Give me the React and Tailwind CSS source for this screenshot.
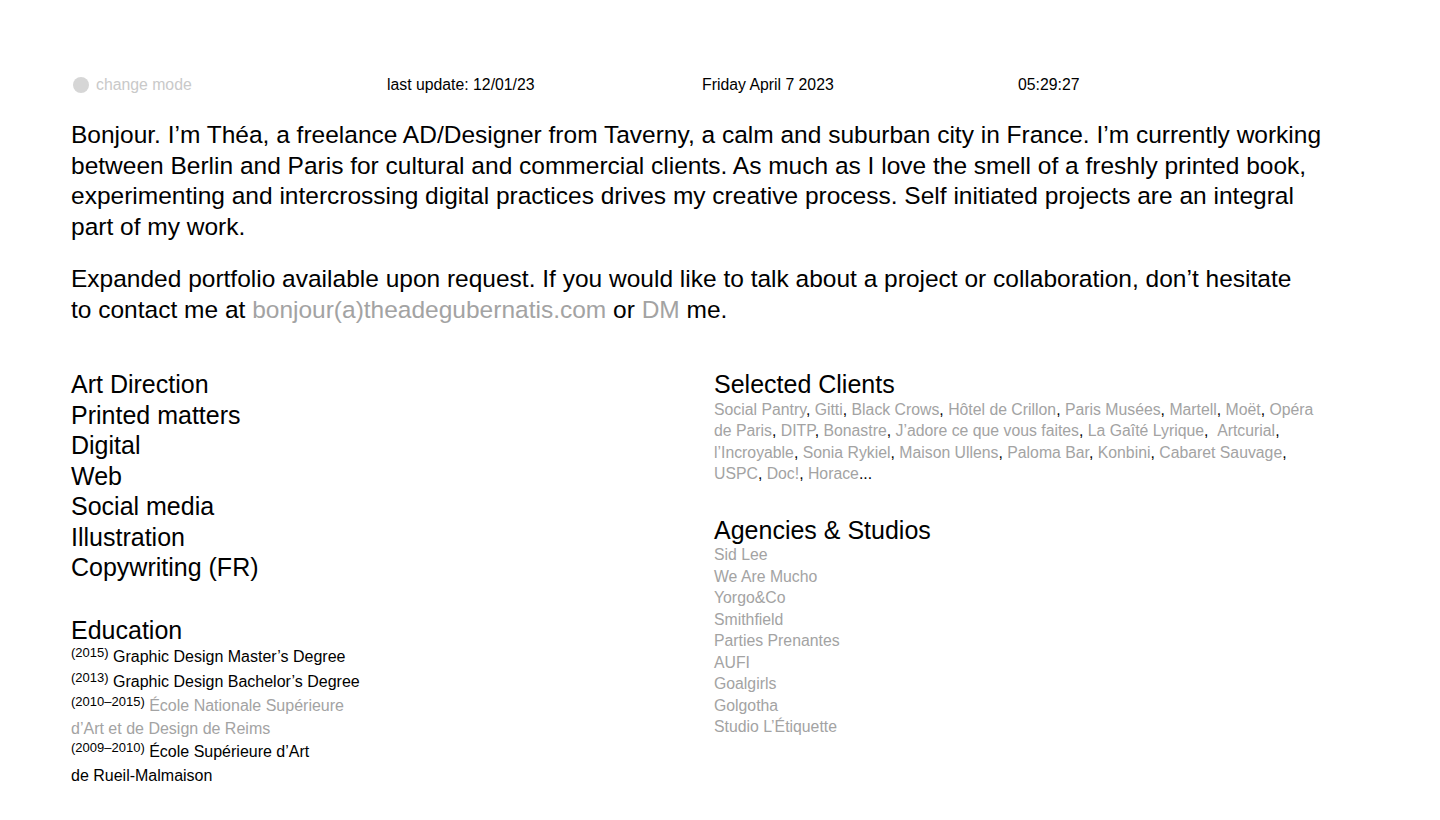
import React from 'react';

const SKILLS = ['Art Direction', 'Printed matters', 'Digital', 'Web', 'Social media', 'Illustration', 'Copywriting (FR)'];

const CLIENTS = [
    'Social Pantry', 'Gitti', 'Black Crows', 'Hôtel de Crillon', 'Paris Musées', 'Martell', 'Moët', 'Opéra de Paris',
    'DITP', 'Bonastre', 'J’adore ce que vous faites', 'La Gaîté Lyrique', '\u00a0Artcurial', 'l’Incroyable', 'Sonia Rykiel',
    'Maison Ullens', 'Paloma Bar', 'Konbini', 'Cabaret Sauvage', 'USPC', 'Doc!', 'Horace',
];

const AGENCIES = ['Sid Lee', 'We Are Mucho', 'Yorgo&Co', 'Smithfield', 'Parties Prenantes', 'AUFI', 'Goalgirls', 'Golgotha', 'Studio L’Étiquette'];

export default function App() {
    return (
        <div
            className="min-h-screen bg-white text-black px-[71px] pt-[75px]"
            style={{ fontFamily: '"Liberation Sans", Arial, sans-serif' }}
        >
            {/* Top bar */}
            <div className="flex text-[15.8px] leading-[20px]">
                <div className="w-[316px] flex items-center gap-[7px] text-[#c9c9c9]">
                    <span className="inline-block ml-[2px] w-[16px] h-[16px] rounded-full bg-[#d6d6d6]"></span>
                    change mode
                </div>
                <div className="w-[315px]">last update: 12/01/23</div>
                <div className="w-[316px]">Friday April 7 2023</div>
                <div>05:29:27</div>
            </div>

            {/* Intro */}
            <div className="w-[1254px] mt-[25px] text-[24.5px] leading-[30.5px]">
                <p>
                    Bonjour. I’m Théa, a freelance AD/Designer from Taverny, a calm and suburban city in France. I’m currently working
                    between Berlin and Paris for cultural and commercial clients. As much as I love the smell of a freshly printed book,
                    experimenting and intercrossing digital practices drives my creative process. Self initiated projects are an integral
                    part of my work.
                </p>
                <p className="mt-[22px]">
                    Expanded portfolio available upon request. If you would like to talk about a project or collaboration, don’t hesitate
                    <br />
                    to contact me at <span className="text-[#a3a3a3]">bonjour(a)theadegubernatis.com</span> or{' '}
                    <span className="text-[#a3a3a3]">DM</span> me.
                </p>
            </div>

            {/* Columns */}
            <div className="flex mt-[44px]">
                <div className="w-[643px]">
                    <ul className="text-[25px] leading-[30.5px]">
                        {SKILLS.map((s) => (
                            <li key={s}>{s}</li>
                        ))}
                    </ul>

                    <h2 className="mt-[32px] text-[25px] leading-[30.5px]">Education</h2>
                    <div className="text-[16px] w-[310px]">
                        <p className="leading-[24.5px]"><sup className="text-[13px] top-[-5px]">(2015)</sup> Graphic Design Master’s Degree</p>
                        <p className="leading-[24.5px]"><sup className="text-[13px] top-[-5px]">(2013)</sup> Graphic Design Bachelor’s Degree</p>
                        <p className="text-[#a3a3a3] leading-[23px]">
                            <sup className="text-[13px] top-[-5px] text-black">(2010–2015)</sup> École Nationale Supérieure d’Art et de Design de Reims
                        </p>
                        <p className="leading-[24px]">
                            <sup className="text-[13px] top-[-5px]">(2009–2010)</sup> École Supérieure d’Art<br />de Rueil-Malmaison
                        </p>
                    </div>
                </div>

                <div className="w-[610px]">
                    <h2 className="text-[25px] leading-[30.5px]">Selected Clients</h2>
                    <p className="mt-[-1px] text-[15.8px] leading-[21.5px] text-[#a3a3a3]">
                        {CLIENTS.map((c, i) => (
                            <React.Fragment key={i}>
                                {c}
                                <span className="text-black">{i < CLIENTS.length - 1 ? ', ' : '...'}</span>
                            </React.Fragment>
                        ))}
                    </p>

                    <h2 className="mt-[30px] text-[25px] leading-[30.5px]">Agencies &amp; Studios</h2>
                    <ul className="mt-[-1px] text-[15.8px] leading-[21.5px] text-[#a3a3a3]">
                        {AGENCIES.map((a) => (
                            <li key={a}>{a}</li>
                        ))}
                    </ul>
                </div>
            </div>
        </div>
    );
}
